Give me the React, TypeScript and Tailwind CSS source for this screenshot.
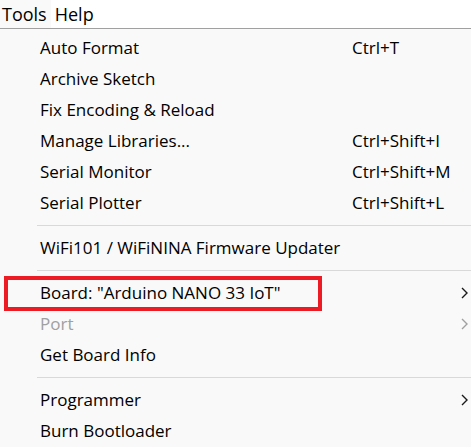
import React from "react";

type Item =
  | { kind: "item"; label: string; shortcut?: string; sub?: boolean; disabled?: boolean; boxed?: boolean }
  | { kind: "sep" };

const items: Item[] = [
  { kind: "item", label: "Auto Format", shortcut: "Ctrl+T" },
  { kind: "item", label: "Archive Sketch" },
  { kind: "item", label: "Fix Encoding & Reload" },
  { kind: "item", label: "Manage Libraries...", shortcut: "Ctrl+Shift+I" },
  { kind: "item", label: "Serial Monitor", shortcut: "Ctrl+Shift+M" },
  { kind: "item", label: "Serial Plotter", shortcut: "Ctrl+Shift+L" },
  { kind: "sep" },
  { kind: "item", label: "WiFi101 / WiFiNINA Firmware Updater" },
  { kind: "sep" },
  { kind: "item", label: 'Board: "Arduino NANO 33 IoT"', sub: true, boxed: true },
  { kind: "item", label: "Port", sub: true, disabled: true },
  { kind: "item", label: "Get Board Info" },
  { kind: "sep" },
  { kind: "item", label: "Programmer", sub: true },
  { kind: "item", label: "Burn Bootloader" },
];

function Chevron({ gray }: { gray?: boolean }) {
  return (
    <svg width="7" height="12" viewBox="0 0 7 12" className="shrink-0">
      <path d="M1 1 L6 6 L1 11" fill="none" stroke={gray ? "#a0a0a0" : "#1a1a1a"} strokeWidth="1.4" />
    </svg>
  );
}

export default function App() {
  return (
    <div
      className="w-[471px] h-[447px] overflow-hidden bg-[#f9f9f9] text-[#000]"
      style={{ fontFamily: '"Open Sans", "Noto Sans", sans-serif' }}
    >
      <div className="flex h-[29px] bg-white border-b border-[#a0a0a0] text-[18px] leading-none">
        <div className="flex items-center pl-[2px] pr-[4px] bg-[#f9f9f9] h-full">Tools</div>
        <div className="flex items-center px-[4px] h-full">Help</div>
      </div>
      <div className="flex flex-col pt-[3px]">
        {items.map((it, i) =>
          it.kind === "sep" ? (
            <div key={i} className="h-[14px] flex items-center pl-[37px]">
              <div className="h-px w-full bg-[#d9d9d9]" />
            </div>
          ) : (
            <div key={i} className="relative h-[31px] flex items-center pl-[40px] pr-[3px] text-[17px]">
              {it.boxed && (
                <div className="absolute left-[4px] top-[-1px] w-[318px] h-[35px] border-[4px] border-[#ed1c24]" />
              )}
              <span className={it.disabled ? "text-[#a0a0a0]" : "text-[#000]"}>{it.label}</span>
              <span className="flex-1" />
              {it.shortcut && <span className="w-[116px] text-[#000]">{it.shortcut}</span>}
              {it.sub && <Chevron gray={it.disabled} />}
            </div>
          )
        )}
      </div>
    </div>
  );
}
